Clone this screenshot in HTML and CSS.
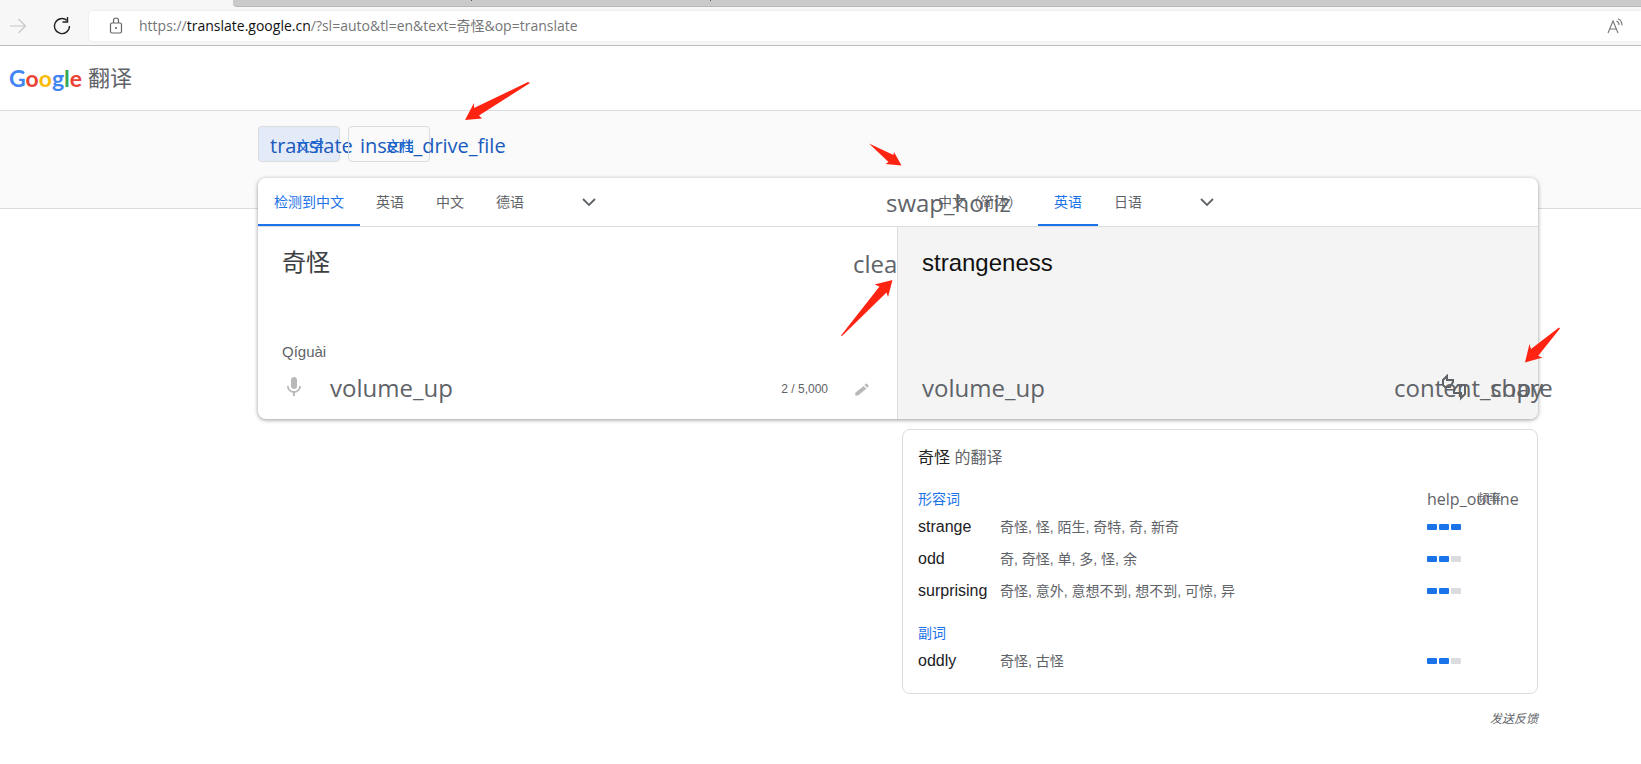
FILE: index.html
```html
<!DOCTYPE html>
<html lang="zh-CN">
<head>
<meta charset="utf-8">
<title>Google 翻译</title>
<link rel="stylesheet" href="styles.css">
</head>
<body>
<div class="browser">
  <div class="tabstrip"><i class="tick"></i><i class="tick"></i></div>
  <div class="toolbar">
    <button class="nav" aria-label="前进" disabled><svg width="18" height="18" viewBox="0 0 18 18"><path d="M1 9h15M9.500 2l7 7-7 7" fill="none" stroke="#c8c8c8" stroke-width="1.200"/></svg></button>
    <button class="nav" aria-label="刷新"><svg width="18" height="18" viewBox="0 0 18 18"><path d="M16.500 9a7.500 7.500 0 1 1-2.700-5.700M14.500 0v5h-5" fill="none" stroke="#222" stroke-width="1.400"/></svg></button>
    <div class="address">
      <svg class="lock" width="14" height="18" viewBox="0 0 14 18"><rect x="1.500" y="6" width="11" height="10" rx="1.500" fill="none" stroke="#666" stroke-width="1.200"/><path d="M4.500 6V3.500a2.500 2.500 0 0 1 5 0V6" fill="none" stroke="#666" stroke-width="1.200"/><circle cx="7" cy="11" r="1" fill="#555"/></svg>
      <span class="url">https://<b>translate.google.cn</b>/?sl=auto&amp;tl=en&amp;text=奇怪&amp;op=translate</span>
      <button class="read" aria-label="大声朗读"><svg width="17" height="17" viewBox="0 0 17 17" fill="none" stroke="#777" stroke-width="1.100"><path d="M1 15L6 3l5 12M3 11h6M9.500 3a4 4 0 0 1 2.500 4M11 .8a7 7 0 0 1 4 6.700"/></svg></button>
    </div>
  </div>
</div>
<header class="header">
  <a class="logo" href="#" aria-label="Google 翻译"><span class="google"><span class="b">G</span><span class="r">o</span><span class="y">o</span><span class="b">g</span><span class="g">l</span><span class="r">e</span></span><span class="product">翻译</span></a>
</header>
<nav class="modes">
  <button class="chip active"><span class="symbol small">translate</span>文字</button>
  <button class="chip"><span class="symbol small">insert_drive_file</span>文档</button>
</nav>
<main class="main">
  <section class="card">
    <div class="langs">
      <div class="side source">
        <button class="tab on">检测到中文</button><button class="tab">英语</button><button class="tab">中文</button><button class="tab">德语</button>
        <button class="more" aria-label="更多源语言"><svg width="16" height="16" viewBox="0 0 16 16"><path d="M2 5l6 6 6-6" fill="none" stroke="#5f6368" stroke-width="1.800"/></svg></button>
      </div>
      <button class="swap"><span class="symbol">swap_horiz</span></button>
      <div class="side">
        <button class="tab">中文（简体）</button><button class="tab on">英语</button><button class="tab">日语</button>
        <button class="more" aria-label="更多目标语言"><svg width="16" height="16" viewBox="0 0 16 16"><path d="M2 5l6 6 6-6" fill="none" stroke="#5f6368" stroke-width="1.800"/></svg></button>
      </div>
    </div>
    <div class="panes">
      <div class="pane left">
        <div class="line"><textarea class="text" aria-label="原文" rows="1">奇怪</textarea><button class="clear"><span class="symbol">clear</span></button></div>
        <div class="reading">Qíguài</div>
        <div class="actions">
          <button class="icon" aria-label="语音输入"><svg width="24" height="26" viewBox="0 0 24 26" fill="#b8b8b8"><path d="M12 14c1.700 0 3-1.300 3-3V5c0-1.700-1.300-3-3-3S9 3.300 9 5v6c0 1.700 1.300 3 3 3zM17.300 11c0 3-2.500 5.100-5.300 5.100S6.700 14 6.700 11H5c0 3.400 2.700 6.200 6 6.700V21h2v-3.300c3.300-.5 6-3.300 6-6.700z"/></svg></button>
          <button class="icon listen"><span class="symbol">volume_up</span></button>
          <span class="count">2 / 5,000</span>
          <button class="icon" aria-label="手写"><svg width="18" height="18" viewBox="0 0 24 24" fill="#b8b8b8"><path d="M3 18.200V22h3.800L17.800 12.900l-3.700-3.700zM20.700 10a1 1 0 0 0 0-1.400l-2.300-2.300a1 1 0 0 0-1.400 0l-1.800 1.800 3.700 3.700z"/></svg></button>
        </div>
      </div>
      <div class="pane right">
        <div class="line"><span class="result" lang="en">strangeness</span></div>
        <div class="actions">
          <button class="icon"><span class="symbol">volume_up</span></button>
          <button class="icon copy"><span class="symbol">content_copy</span></button>
          <button class="icon" aria-label="评价翻译"><svg width="24" height="28" viewBox="0 0 24 28" fill="none" stroke="#5f6368" stroke-width="2"><path d="M5 2L1 6v5l2 2h5l3-5V6H5zM19 24l4-4v-9h-7l-4 5v3h7z"/></svg></button>
          <button class="icon share"><span class="symbol">share</span></button>
        </div>
      </div>
    </div>
  </section>
  <section class="dict">
    <h2 class="title"><span>奇怪</span> 的翻译</h2>
    <table class="words">
      <colgroup><col class="term"><col><col class="rate"></colgroup>
      <tbody>
        <tr class="kind"><th colspan="2" scope="colgroup">形容词</th><td><div class="help"><span class="symbol tiny">help_outline</span><span class="freq">频率</span></div></td></tr>
        <tr><th scope="row">strange</th><td>奇怪, 怪, 陌生, 奇特, 奇, 新奇</td><td><div class="bars"><i></i><i></i><i></i></div></td></tr>
        <tr><th scope="row">odd</th><td>奇, 奇怪, 单, 多, 怪, 余</td><td><div class="bars"><i></i><i></i><i class="off"></i></div></td></tr>
        <tr><th scope="row">surprising</th><td>奇怪, 意外, 意想不到, 想不到, 可惊, 异</td><td><div class="bars"><i></i><i></i><i class="off"></i></div></td></tr>
      </tbody>
      <tbody>
        <tr class="kind next"><th colspan="3" scope="colgroup">副词</th></tr>
        <tr><th scope="row">oddly</th><td>奇怪, 古怪</td><td><div class="bars"><i></i><i></i><i class="off"></i></div></td></tr>
      </tbody>
    </table>
  </section>
  <a class="feedback" href="#">发送反馈</a>
</main>
<svg class="arrow a1" width="65" height="39" viewBox="465 81 65 39"><path d="M465 120l9-17v5l54-26 2 1-51 32.500 3 3z"/></svg>
<svg class="arrow a2" width="33" height="22" viewBox="869 143 33 22"><path d="M869 143.500l24.500 11.500.500-3 7.500 13.500-16-1.500 3-2z"/></svg>
<svg class="arrow a3" width="52" height="57" viewBox="841 280 52 57"><path d="M892.500 280l-18 4.500 5 2-38.500 49 1 .500 44.500-43.500 1.500 4.500z"/></svg>
<svg class="arrow a4" width="36" height="36" viewBox="1525 327 36 36"><path d="M1525 362.500l4.500-18.500 1.500 5 28-21.500 1 1-22 27.500 4.500 1.500z"/></svg>
</body>
</html>
```

FILE: styles.css
```css
* { box-sizing: border-box; }
body {
  margin: 0;
  position: relative;
  background: #fff;
  color: #5f6368;
  font: 14px/20px "Liberation Sans", "Noto Sans CJK SC", sans-serif;
}
button {
  border: 0;
  padding: 0;
  background: none;
  color: inherit;
  font: inherit;
  white-space: nowrap;
}
svg { display: block; }

/* Browser frame */
.browser { background: #f7f7f7; border-bottom: 1px solid #bdbdbd; }
.tabstrip {
  height: 7px;
  margin-left: 233px;
  padding-left: 238px;
  display: flex;
  gap: 238px;
  background: #cacaca;
  border-bottom: 1px solid #b8b8b8;
  border-bottom-left-radius: 4px;
}
.tick { width: 1px; height: 1px; background: #555; }
.toolbar { display: flex; align-items: center; padding: 4px 0 4px 9px; }
.nav { margin-right: 26px; }
.nav + .nav { margin-right: 18px; }
.address {
  flex: 1;
  display: flex;
  align-items: center;
  height: 30px;
  padding: 0 17px 0 20px;
  background: #fff;
  border-radius: 4px 0 0 4px;
  box-shadow: 0 0 2px #ddd;
}
.url {
  flex: 1;
  padding-left: 16px;
  color: #767676;
  font-family: "Open Sans", "Noto Sans CJK SC", sans-serif;
  font-size: 14px;
}
.url b { color: #111; font-weight: 400; }

/* Header */
.header {
  display: flex;
  align-items: center;
  height: 65px;
  padding-left: 9px;
  border-bottom: 1px solid #dadce0;
}
.logo { display: flex; align-items: center; gap: 6px; color: #5f6368; text-decoration: none; }
.google { font: 700 23px/32px Lato, sans-serif; }
.b { color: #4285f4; }
.r { color: #ea4335; }
.y { color: #fbbc05; }
.g { color: #34a853; }
.product { font-size: 22px; line-height: 32px; padding-top: 2px; }

.symbol {
  display: inline-block;
  width: 24px;
  color: #5f6368;
  font: 24px/24px "Open Sans", sans-serif;
  text-align: left;
  white-space: nowrap;
}
.small { width: 18px; color: #185abc; font-size: 20px; }
.tiny { width: 16px; font-size: 16px; }

/* Mode switch */
.modes {
  display: flex;
  gap: 8px;
  height: 98px;
  padding: 15px 103px 0 258px;
  background: #fafafa;
  border-bottom: 1px solid #dadce0;
}
.chip {
  display: flex;
  align-items: center;
  gap: 8px;
  height: 36px;
  padding: 3px 15px 0 11px;
  border: 1px solid #dadce0;
  border-radius: 4px;
  color: #1967d2;
}
.active { background: #e4ebf8; }

/* Translator */
.main { margin: -31px 103px 0 258px; }
.card {
  background: #fff;
  border-radius: 8px;
  box-shadow: 0 1px 4px rgba(0, 0, 0, .4);
}
.langs { display: flex; height: 49px; border-bottom: 1px solid #dadce0; }
.side { flex: 1; display: flex; }
.tab { height: 48px; padding: 2px 16px 0; border-bottom: 2px solid transparent; }
.on { border-color: #1a73e8; color: #1a73e8; }
.more { width: 48px; margin-left: 25px; display: grid; place-items: center; }
.swap { width: 48px; padding: 4px 12px 0; }
.swap .symbol { width: 24px; }
.panes { display: flex; }
.pane {
  flex: 1;
  min-width: 0;
  display: flex;
  flex-direction: column;
  min-height: 192px;
  padding: 20px 24px 7px;
}
.left { padding-right: 23px; border-right: 1px solid #dadce0; overflow: hidden; }
.right { background: #f4f4f4; border-radius: 0 0 8px 0; }
.line { display: flex; justify-content: space-between; height: 32px; }
.text {
  flex: 1;
  min-width: 0;
  height: 32px;
  padding: 0;
  border: 0;
  outline: 0;
  resize: none;
  overflow: hidden;
  background: none;
  color: #3c4043;
  font: 24px/28px "Noto Sans CJK SC", sans-serif;
}
.clear { width: 21px; padding-top: 3px; }
.result { color: #111; font-size: 24px; line-height: 32px; }
.reading { margin-top: auto; font-size: 15px; line-height: 24px; }
.actions { display: flex; align-items: center; height: 48px; }
.right .actions { margin-top: auto; }
.icon { width: 24px; display: grid; place-items: center; }
.listen { margin-left: 24px; }
.count { margin-left: auto; margin-right: 22px; padding-top: 2px; font-size: 12px; }
.copy { margin-left: auto; margin-right: 24px; }
.share { margin-left: 24px; }

/* Dictionary */
.dict {
  width: calc(50% - 4px);
  margin: 10px 0 0 auto;
  padding: 16px 15px;
  border: 1px solid #dadce0;
  border-radius: 8px;
}
.title { margin: 0 0 17px; font-size: 16px; line-height: 24px; font-weight: 400; }
.title span { color: #202124; }
.words { width: 100%; border-collapse: collapse; table-layout: fixed; }
.term { width: 82px; }
.rate { width: 95px; }
.words th, .words td { height: 32px; padding: 0; font-weight: 400; text-align: left; }
.words th { color: #202124; font-size: 16px; }
.words .kind th, .words .kind td { height: 24px; }
.words .kind th { color: #1a73e8; font-size: 14px; }
.words .next th { height: 38px; padding-top: 14px; }
.help { display: flex; align-items: center; gap: 34px; height: 20px; }
.freq { font-size: 12px; white-space: nowrap; }
.bars { display: flex; gap: 2px; }
.bars i { width: 10px; height: 6px; border-radius: 1px; background: #1a73e8; }
.bars .off { background: #dadce0; }
.feedback {
  display: block;
  margin-top: 15px;
  color: #5f6368;
  font-size: 12px;
  font-style: italic;
  text-align: right;
  text-decoration: none;
}

/* Annotation arrows */
.arrow { position: absolute; fill: #ff2312; overflow: visible; }
.a1 { left: 465px; top: 81px; }
.a2 { left: 869px; top: 143px; }
.a3 { left: 841px; top: 280px; }
.a4 { left: 1525px; top: 327px; }
```
